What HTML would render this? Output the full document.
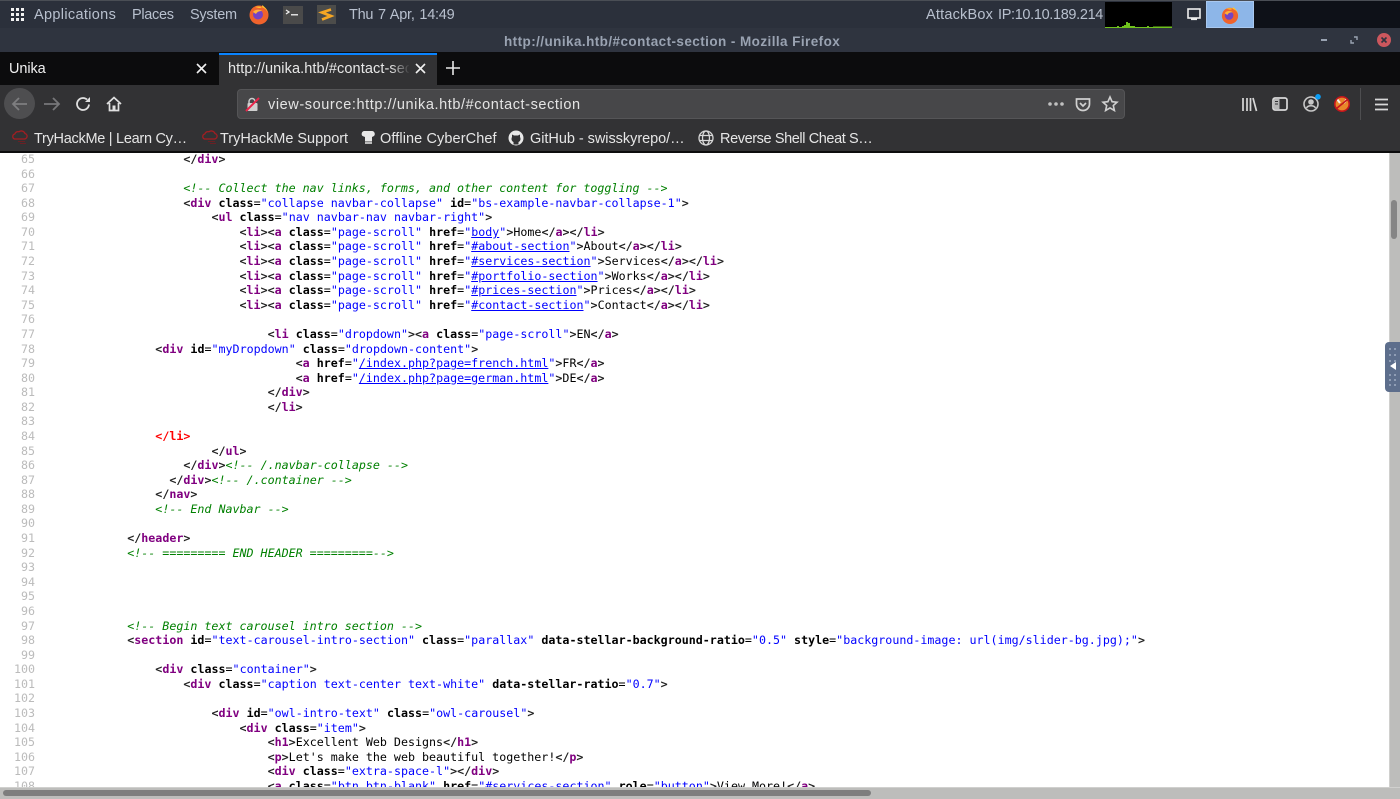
<!DOCTYPE html>
<html><head><meta charset="utf-8"><title>view-source</title>
<style>
html,body{margin:0;padding:0;width:1400px;height:799px;overflow:hidden;background:#fff}
body{position:relative;font-family:"Liberation Sans",sans-serif;filter:blur(.3px)}
.a{position:absolute}
.t{position:absolute;white-space:nowrap}
pre{position:absolute;margin:0;font:11.665px/14.576px "DejaVu Sans Mono",monospace;color:#000}
pre b{color:#800080;font-weight:bold}
pre strong{color:#000;font-weight:bold}
pre var{color:#00f;font-style:normal}
pre u{color:#00f}
pre i{color:#008000;font-style:italic}
pre em{color:#f00;font-weight:bold;font-style:normal}
pre span{font-weight:bold;color:#222}
svg{position:absolute;overflow:visible}
</style></head><body>

<div class="a" style="left:0;top:152px;width:1389px;height:635px;overflow:hidden;background:#fff">
<pre style="left:0;top:0px;width:35px;text-align:right;color:#bbb">65
66
67
68
69
70
71
72
73
74
75
76
77
78
79
80
81
82
83
84
85
86
87
88
89
90
91
92
93
94
95
96
97
98
99
100
101
102
103
104
105
106
107
108</pre>
<pre style="left:43px;top:0px"><span>                    &lt;/</span><b>div</b><span>&gt;</span>

                    <i>&lt;!-- Collect the nav links, forms, and other content for toggling --&gt;</i>
                    <span>&lt;</span><b>div</b> <strong>class</strong>=<var>"collapse navbar-collapse"</var> <strong>id</strong>=<var>"bs-example-navbar-collapse-1"</var><span>&gt;</span>
                        <span>&lt;</span><b>ul</b> <strong>class</strong>=<var>"nav navbar-nav navbar-right"</var><span>&gt;</span>
                            <span>&lt;</span><b>li</b><span>&gt;&lt;</span><b>a</b> <strong>class</strong>=<var>"page-scroll"</var> <strong>href</strong>=<var>"</var><u>body</u><var>"</var><span>&gt;</span>Home<span>&lt;/</span><b>a</b><span>&gt;&lt;/</span><b>li</b><span>&gt;</span>
                            <span>&lt;</span><b>li</b><span>&gt;&lt;</span><b>a</b> <strong>class</strong>=<var>"page-scroll"</var> <strong>href</strong>=<var>"</var><u>#about-section</u><var>"</var><span>&gt;</span>About<span>&lt;/</span><b>a</b><span>&gt;&lt;/</span><b>li</b><span>&gt;</span>
                            <span>&lt;</span><b>li</b><span>&gt;&lt;</span><b>a</b> <strong>class</strong>=<var>"page-scroll"</var> <strong>href</strong>=<var>"</var><u>#services-section</u><var>"</var><span>&gt;</span>Services<span>&lt;/</span><b>a</b><span>&gt;&lt;/</span><b>li</b><span>&gt;</span>
                            <span>&lt;</span><b>li</b><span>&gt;&lt;</span><b>a</b> <strong>class</strong>=<var>"page-scroll"</var> <strong>href</strong>=<var>"</var><u>#portfolio-section</u><var>"</var><span>&gt;</span>Works<span>&lt;/</span><b>a</b><span>&gt;&lt;/</span><b>li</b><span>&gt;</span>
                            <span>&lt;</span><b>li</b><span>&gt;&lt;</span><b>a</b> <strong>class</strong>=<var>"page-scroll"</var> <strong>href</strong>=<var>"</var><u>#prices-section</u><var>"</var><span>&gt;</span>Prices<span>&lt;/</span><b>a</b><span>&gt;&lt;/</span><b>li</b><span>&gt;</span>
                            <span>&lt;</span><b>li</b><span>&gt;&lt;</span><b>a</b> <strong>class</strong>=<var>"page-scroll"</var> <strong>href</strong>=<var>"</var><u>#contact-section</u><var>"</var><span>&gt;</span>Contact<span>&lt;/</span><b>a</b><span>&gt;&lt;/</span><b>li</b><span>&gt;</span>

                                <span>&lt;</span><b>li</b> <strong>class</strong>=<var>"dropdown"</var><span>&gt;&lt;</span><b>a</b> <strong>class</strong>=<var>"page-scroll"</var><span>&gt;</span>EN<span>&lt;/</span><b>a</b><span>&gt;</span>
                <span>&lt;</span><b>div</b> <strong>id</strong>=<var>"myDropdown"</var> <strong>class</strong>=<var>"dropdown-content"</var><span>&gt;</span>
                                    <span>&lt;</span><b>a</b> <strong>href</strong>=<var>"</var><u>/index.php?page=french.html</u><var>"</var><span>&gt;</span>FR<span>&lt;/</span><b>a</b><span>&gt;</span>
                                    <span>&lt;</span><b>a</b> <strong>href</strong>=<var>"</var><u>/index.php?page=german.html</u><var>"</var><span>&gt;</span>DE<span>&lt;/</span><b>a</b><span>&gt;</span>
                                <span>&lt;/</span><b>div</b><span>&gt;</span>
                                <span>&lt;/</span><b>li</b><span>&gt;</span>

                <em>&lt;/li&gt;</em>
                        <span>&lt;/</span><b>ul</b><span>&gt;</span>
                    <span>&lt;/</span><b>div</b><span>&gt;</span><i>&lt;!-- /.navbar-collapse --&gt;</i>
                  <span>&lt;/</span><b>div</b><span>&gt;</span><i>&lt;!-- /.container --&gt;</i>
                <span>&lt;/</span><b>nav</b><span>&gt;</span>
                <i>&lt;!-- End Navbar --&gt;</i>

            <span>&lt;/</span><b>header</b><span>&gt;</span>
            <i>&lt;!-- ========= END HEADER =========--&gt;</i>




            <i>&lt;!-- Begin text carousel intro section --&gt;</i>
            <span>&lt;</span><b>section</b> <strong>id</strong>=<var>"text-carousel-intro-section"</var> <strong>class</strong>=<var>"parallax"</var> <strong>data-stellar-background-ratio</strong>=<var>"0.5"</var> <strong>style</strong>=<var>"background-image: url(img/slider-bg.jpg);"</var><span>&gt;</span>

                <span>&lt;</span><b>div</b> <strong>class</strong>=<var>"container"</var><span>&gt;</span>
                    <span>&lt;</span><b>div</b> <strong>class</strong>=<var>"caption text-center text-white"</var> <strong>data-stellar-ratio</strong>=<var>"0.7"</var><span>&gt;</span>

                        <span>&lt;</span><b>div</b> <strong>id</strong>=<var>"owl-intro-text"</var> <strong>class</strong>=<var>"owl-carousel"</var><span>&gt;</span>
                            <span>&lt;</span><b>div</b> <strong>class</strong>=<var>"item"</var><span>&gt;</span>
                                <span>&lt;</span><b>h1</b><span>&gt;</span>Excellent Web Designs<span>&lt;/</span><b>h1</b><span>&gt;</span>
                                <span>&lt;</span><b>p</b><span>&gt;</span>Let's make the web beautiful together!<span>&lt;/</span><b>p</b><span>&gt;</span>
                                <span>&lt;</span><b>div</b> <strong>class</strong>=<var>"extra-space-l"</var><span>&gt;&lt;/</span><b>div</b><span>&gt;</span>
                                <span>&lt;</span><b>a</b> <strong>class</strong>=<var>"btn btn-blank"</var> <strong>href</strong>=<var>"</var><u>#services-section</u><var>"</var> <strong>role</strong>=<var>"button"</var><span>&gt;</span>View More!<span>&lt;/</span><b>a</b><span>&gt;</span></pre>
</div>

<!-- scrollbars -->
<div class="a" style="left:1389px;top:153px;width:11px;height:634px;background:#bdbdbb;border-left:1px solid #d0d0ce;box-sizing:border-box"></div>
<div class="a" style="left:1391px;top:200px;width:6px;height:39px;background:#858585;border-radius:3px"></div>
<div class="a" style="left:0;top:787px;width:1400px;height:12px;background:#bdbdbb;border-top:1px solid #d0d0ce;box-sizing:border-box"></div>
<div class="a" style="left:3px;top:790px;width:868px;height:6px;background:#7e7e7e;border-radius:3px"></div>
<!-- side handle -->
<div class="a" style="left:1385px;top:342px;width:15px;height:50px;background:#5d6e8c;border-radius:4px 0 0 4px"></div>
<svg style="left:1385px;top:342px" width="15" height="50">
<g fill="#8f9db5"><rect x="4" y="6" width="2" height="2"/><rect x="9" y="6" width="2" height="2"/><rect x="4" y="12" width="2" height="2"/><rect x="9" y="12" width="2" height="2"/><rect x="4" y="18" width="2" height="2"/><rect x="9" y="18" width="2" height="2"/><rect x="4" y="32" width="2" height="2"/><rect x="9" y="32" width="2" height="2"/><rect x="4" y="37" width="2" height="2"/><rect x="9" y="37" width="2" height="2"/><rect x="4" y="42" width="2" height="2"/><rect x="9" y="42" width="2" height="2"/></g>
<path d="M5 24 L11 20 V28 Z" fill="#fff"/></svg>

<!-- top panel -->
<div class="a" style="left:0;top:0;width:1400px;height:28px;background:#2b303b;border-top:1px solid #4a4e55;box-sizing:border-box"></div>
<svg style="left:11px;top:8px" width="14" height="14"><g fill="#f2f2f2"><rect x="0" y="0" width="3" height="3"/><rect x="5" y="0" width="3" height="3"/><rect x="10" y="0" width="3" height="3"/><rect x="0" y="5" width="3" height="3"/><rect x="5" y="5" width="3" height="3"/><rect x="10" y="5" width="3" height="3"/><rect x="0" y="10" width="3" height="3"/><rect x="5" y="10" width="3" height="3"/><rect x="10" y="10" width="3" height="3"/></g></svg>
<div class="t" style="left:34px;top:7px;font-size:14.5px;letter-spacing:.33px;color:#b8c0ce">Applications</div>
<div class="t" style="left:132px;top:7px;font-size:14.5px;letter-spacing:-.3px;color:#b8c0ce">Places</div>
<div class="t" style="left:190px;top:7px;font-size:14.5px;letter-spacing:-.25px;color:#b8c0ce">System</div>
<svg style="left:249px;top:4px" width="20" height="20" viewBox="0 0 20 20"><circle cx="10" cy="11" r="9.5" fill="#f0632c"/><path d="M6 3C12 1 19 5 19.5 11 19 6 16 3 13 1 14 3 12 4 10 4Z" fill="#ffc52a"/><circle cx="9" cy="10.5" r="5" fill="#7543c4"/><path d="M4 8C6 5 11 5 13 7 10 7 8 8 7 10Z" fill="#ffb13a"/></svg>
<div class="a" style="left:283px;top:6px;width:20px;height:18px;background:#4a4a4a"></div>
<svg style="left:283px;top:6px" width="20" height="18"><path d="M3 4 L6 6 L3 8" stroke="#eee" fill="none" stroke-width="1.3"/><rect x="8" y="8" width="7" height="1.5" fill="#ddd"/></svg>
<div class="a" style="left:317px;top:5px;width:19px;height:19px;background:#4c4c4a"></div>
<svg style="left:317px;top:5px" width="19" height="19"><path d="M14 4.500 L5 7.500 L14 11 L5 14.500" stroke="#f6a623" stroke-width="2.700" fill="none"/></svg>
<div class="t" style="left:349px;top:7px;font-size:14.5px;letter-spacing:-.25px;word-spacing:1px;color:#b8c0ce">Thu 7 Apr, 14:49</div>
<div class="t" style="left:926px;top:7px;font-size:14.5px;letter-spacing:.2px;color:#b8c0ce">AttackBox</div>
<div class="t" style="left:998px;top:7px;font-size:14.5px;letter-spacing:-.34px;color:#b8c0ce">IP:10.10.189.214</div>
<div class="a" style="left:1105px;top:2px;width:67px;height:26px;background:#000"></div>
<svg style="left:1105px;top:2px" width="67" height="26"><path d="M0 26V25H12V24H14V25H17V24H19V23H21V20H23V21H25V24H30V25H42V24H44V25H48V24.500H67V26Z" fill="#6fc21c"/></svg>
<svg style="left:1187px;top:8px" width="16" height="14"><rect x="1" y="1" width="12" height="9" fill="none" stroke="#eee" stroke-width="1.6"/><rect x="4" y="10.5" width="6" height="1.6" fill="#eee"/></svg>
<div class="a" style="left:1206px;top:1px;width:48px;height:27px;background:#8db6e8;box-sizing:border-box;border:1px solid #a9c8ef"></div>
<svg style="left:1221px;top:6px" width="18" height="18" viewBox="0 0 20 20"><circle cx="10" cy="11" r="9" fill="#f0632c"/><path d="M6 3C12 1 19 5 19.5 11 19 6 16 3 13 1 14 3 12 4 10 4Z" fill="#ffc52a"/><circle cx="9" cy="10.5" r="4.8" fill="#7543c4"/><path d="M4 8C6 5 11 5 13 7 10 7 8 8 7 10Z" fill="#ffb13a"/></svg>
<div class="a" style="left:1254px;top:1px;width:146px;height:27px;background:#0e1118"></div>

<!-- title bar -->
<div class="a" style="left:0;top:28px;width:1400px;height:25px;background:#2f343f"></div>
<div class="t" style="left:504px;top:34px;font-size:13.5px;font-weight:bold;letter-spacing:.43px;color:#9aa3b2">http://unika.htb/#contact-section - Mozilla Firefox</div>
<div class="a" style="left:1321px;top:39px;width:6px;height:2px;background:#9aa3b2"></div>
<svg style="left:1350px;top:36px" width="8" height="8"><path d="M4 1H7V4M4 7H1V4" stroke="#9aa3b2" stroke-width="1.4" fill="none"/></svg>
<svg style="left:1377px;top:33px" width="14" height="14"><circle cx="7" cy="7" r="7" fill="#cc575d"/><path d="M4.5 4.5L9.5 9.5M9.5 4.5L4.5 9.5" stroke="#2f343f" stroke-width="1.6"/></svg>

<!-- tab bar -->
<div class="a" style="left:0;top:52px;width:1400px;height:33px;background:#0c0c0d"></div>
<div class="a" style="left:219px;top:53px;width:218px;height:32px;background:#323234;border-top:2px solid #0a84ff;box-sizing:border-box"></div>
<div class="t" style="left:9px;top:61px;font-size:14.5px;letter-spacing:-.1px;color:#f0f0f0">Unika</div>
<svg style="left:196px;top:63px" width="11" height="11"><path d="M1 1L10 10M10 1L1 10" stroke="#f0f0f0" stroke-width="1.6"/></svg>
<div class="t" style="left:228px;top:61px;width:181px;overflow:hidden;font-size:14.5px;letter-spacing:.1px;color:#e8e8e8">http://unika.htb/#contact-section</div>
<div class="a" style="left:390px;top:56px;width:20px;height:28px;background:linear-gradient(90deg,rgba(50,50,52,0),#323234)"></div>
<svg style="left:415px;top:63px" width="11" height="11"><path d="M1 1L10 10M10 1L1 10" stroke="#f0f0f0" stroke-width="1.6"/></svg>
<svg style="left:446px;top:61px" width="14" height="14"><path d="M7 0V14M0 7H14" stroke="#e8e8e8" stroke-width="1.6"/></svg>

<!-- toolbar -->
<div class="a" style="left:0;top:85px;width:1400px;height:66px;background:#323234"></div>
<div class="a" style="left:4px;top:88px;width:31px;height:31px;border-radius:50%;background:#4e4e50"></div>
<svg style="left:11px;top:96px" width="18" height="16"><path d="M16 8H2M8 2L2 8L8 14" stroke="#7e7e80" stroke-width="1.8" fill="none"/></svg>
<svg style="left:43px;top:96px" width="18" height="16"><path d="M1 8H15M10 2L16 8L10 14" stroke="#77777a" stroke-width="1.8" fill="none"/></svg>
<svg style="left:75px;top:96px" width="17" height="16"><path d="M14 8.5A6 6 0 1 1 12 3.5" stroke="#e0e0e0" stroke-width="1.8" fill="none"/><path d="M15 1V6H10Z" fill="#e0e0e0"/></svg>
<svg style="left:106px;top:96px" width="16" height="16"><path d="M1 8L8 1.5L15 8M3.5 7V14.5H12.5V7" stroke="#e0e0e0" stroke-width="1.7" fill="none"/><rect x="6.5" y="9.5" width="3" height="5" fill="#e0e0e0"/></svg>
<div class="a" style="left:237px;top:89px;width:888px;height:30px;background:#474749;border:1px solid #555557;border-radius:4px;box-sizing:border-box"></div>
<svg style="left:245px;top:97px" width="15" height="15"><path d="M4 6V4.5A3 3 0 0 1 10 4.5V6" stroke="#ccc" stroke-width="1.5" fill="none"/><rect x="2.5" y="6" width="10" height="8" rx="1" fill="#d0d0d0"/><path d="M1 14L14 1" stroke="#e8254a" stroke-width="2"/></svg>
<div class="t" style="left:268px;top:97px;font-size:14.5px;letter-spacing:.59px;color:#e4e4e4">view-source:http://unika.htb/#contact-section</div>
<svg style="left:1048px;top:101px" width="16" height="6"><g fill="#c0c0c0"><circle cx="2" cy="3" r="1.8"/><circle cx="8" cy="3" r="1.8"/><circle cx="14" cy="3" r="1.8"/></g></svg>
<svg style="left:1075px;top:97px" width="16" height="15"><path d="M1.5 2H14.500V7A6.500 6.500 0 0 1 1.500 7Z" stroke="#d0d0d0" stroke-width="1.7" fill="none"/><path d="M5 6L8 9L11 6" stroke="#d0d0d0" stroke-width="1.7" fill="none"/></svg>
<svg style="left:1102px;top:96px" width="16" height="16"><path d="M8 1L10.100 5.700L15 6.200L11.300 9.500L12.400 14.500L8 11.900L3.600 14.500L4.700 9.500L1 6.200L5.900 5.700Z" stroke="#d0d0d0" stroke-width="1.6" fill="none"/></svg>
<svg style="left:1241px;top:97px" width="16" height="15"><g stroke="#d8d8d8" stroke-width="1.7" fill="none"><path d="M2 1V14M6 1V14M9.500 1V14M12 1L15.500 14"/></g></svg>
<svg style="left:1272px;top:97px" width="16" height="14"><rect x="1" y="1" width="14" height="12" rx="2" stroke="#d8d8d8" stroke-width="1.7" fill="none"/><rect x="2" y="2" width="5.500" height="10" fill="#d8d8d8" opacity=".8"/><path d="M3 4.500H6M3 7H6" stroke="#323234" stroke-width="1"/></svg>
<svg style="left:1303px;top:94px" width="20" height="18"><circle cx="8" cy="10" r="7" stroke="#c8c8c8" stroke-width="1.6" fill="none"/><circle cx="8" cy="8" r="2.800" fill="#c8c8c8"/><path d="M3.500 14C5 11 11 11 12.500 14" stroke="#c8c8c8" stroke-width="1.600" fill="none"/><circle cx="15" cy="2.800" r="2.800" fill="#0a9df5"/></svg>
<svg style="left:1333px;top:95px" width="18" height="18"><circle cx="9" cy="9" r="7" fill="#e8862a"/><path d="M4 4L7 8M14 4L11 8" stroke="#f4f0e8" stroke-width="2"/><circle cx="9" cy="9" r="7.200" stroke="#c4161c" stroke-width="1.600" fill="none"/><path d="M3.500 13.500L14.500 4.500" stroke="#c4161c" stroke-width="1.600"/></svg>
<div class="a" style="left:1360px;top:88px;width:1px;height:32px;background:#4e4e50"></div>
<svg style="left:1375px;top:98px" width="13" height="13"><path d="M0 1.500H13M0 6.500H13M0 11.500H13" stroke="#d8d8d8" stroke-width="1.800"/></svg>

<!-- bookmarks -->
<svg style="left:11px;top:129px" width="18" height="16"><path d="M3.500 10H13.500A2.800 2.800 0 0 0 14 4.500A3.800 3.800 0 0 0 8 2.800A3.300 3.300 0 0 0 3.800 5A2.600 2.600 0 0 0 3.500 10Z" stroke="#a21e22" stroke-width="1.300" fill="none"/><path d="M7 12.500H14M9 14.500H15" stroke="#6a2024" stroke-width="1"/></svg>
<div class="t" style="left:34px;top:131px;font-size:14.5px;letter-spacing:-.28px;color:#e6e6e6">TryHackMe | Learn Cy…</div>
<svg style="left:201px;top:129px" width="18" height="16"><path d="M3.500 10H13.500A2.800 2.800 0 0 0 14 4.500A3.800 3.800 0 0 0 8 2.800A3.300 3.300 0 0 0 3.800 5A2.600 2.600 0 0 0 3.500 10Z" stroke="#a21e22" stroke-width="1.300" fill="none"/><path d="M7 12.500H14M9 14.500H15" stroke="#6a2024" stroke-width="1"/></svg>
<div class="t" style="left:220px;top:131px;font-size:14.5px;letter-spacing:-.02px;color:#e6e6e6">TryHackMe Support</div>
<svg style="left:361px;top:130px" width="14" height="14"><path d="M3 1H11A3 3 0 0 1 13 6L11 7V11.500H4V7L1.500 6A3 3 0 0 1 3 1Z" fill="#e8e8e8"/><rect x="4" y="12" width="7" height="2" fill="#bbb"/></svg>
<div class="t" style="left:380px;top:131px;font-size:14.5px;letter-spacing:.1px;color:#e6e6e6">Offline CyberChef</div>
<svg style="left:508px;top:130px" width="16" height="16"><circle cx="8" cy="8" r="7.500" fill="#e8e8e8"/><path d="M5.500 14.500V12C3.500 11 3 9 4 7V4.500L6 5.500H10L12 4.500V7C13 9 12.500 11 10.500 12V14.500Z" fill="#323234"/></svg>
<div class="t" style="left:530px;top:131px;font-size:14.5px;letter-spacing:-.04px;color:#e6e6e6">GitHub - swisskyrepo/…</div>
<svg style="left:698px;top:130px" width="16" height="16"><g stroke="#d8d8d8" stroke-width="1.300" fill="none"><circle cx="8" cy="8" r="7"/><ellipse cx="8" cy="8" rx="3.500" ry="7"/><path d="M1.500 5.500H14.500M1.500 10.500H14.500"/></g></svg>
<div class="t" style="left:720px;top:131px;font-size:14.5px;letter-spacing:-.4px;color:#e6e6e6">Reverse Shell Cheat S…</div>
<div class="a" style="left:0;top:151px;width:1400px;height:2px;background:#0c0c0d"></div>

</body></html>
